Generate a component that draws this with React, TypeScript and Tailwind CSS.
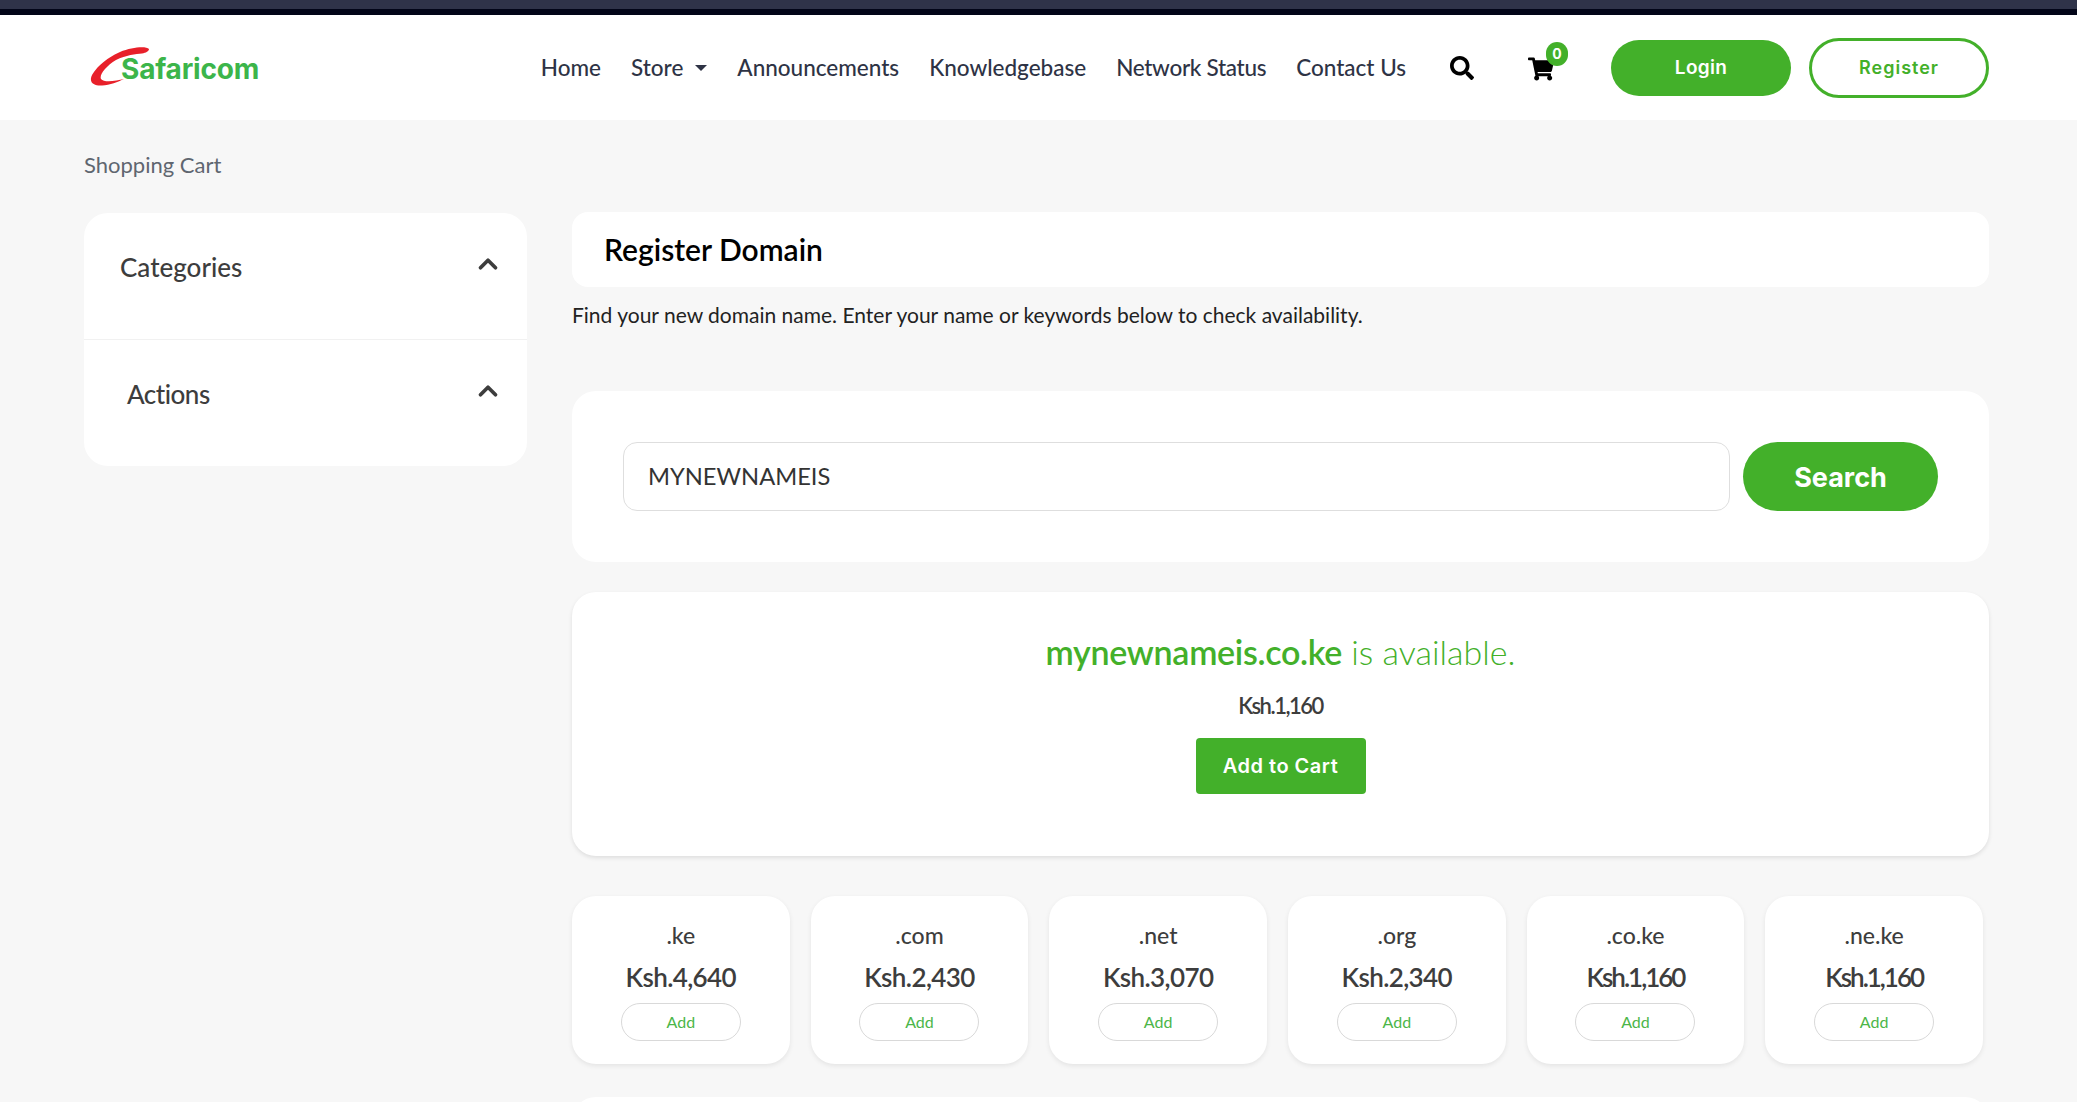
import { ChevronUp } from "lucide-react";
import { FaSearch, FaShoppingCart } from "react-icons/fa";

const navLinks = [
  { label: "Announcements", tracking: "" },
  { label: "Knowledgebase", tracking: "" },
  { label: "Network Status", tracking: "tracking-[-0.3px]" },
  { label: "Contact Us", tracking: "" },
];

const tlds = [
  { name: ".ke", price: "Ksh.4,640", tracking: "tracking-[-0.6px]" },
  { name: ".com", price: "Ksh.2,430", tracking: "tracking-[-0.6px]" },
  { name: ".net", price: "Ksh.3,070", tracking: "tracking-[-0.6px]" },
  { name: ".org", price: "Ksh.2,340", tracking: "tracking-[-0.6px]" },
  { name: ".co.ke", price: "Ksh.1,160", tracking: "tracking-[-2px]" },
  { name: ".ne.ke", price: "Ksh.1,160", tracking: "tracking-[-2px]" },
];

function Logo() {
  return (
    <div className="relative h-[66px] w-[170px]">
      <svg viewBox="0 0 60 40" className="absolute left-[1px] top-[12px] h-[40px] w-[60px]">
        <path
          d="M59 2C56-1 42 0 30 5C16 11 3 23 1 31C0 37 6 39 12 38.5C20 38 28 35 34 32C26 34 14 36 11 32C9 28 16 19 26 13C36 8 46 7 52 6.5C56 6 59 4 59 2Z"
          fill="#e8202a"
        />
      </svg>
      <span className="absolute left-[32px] top-[14px] font-['Inter',sans-serif] text-[28px] font-bold leading-[40px] tracking-[-0.2px] text-[#3cb54a]">
        Safaricom
      </span>
    </div>
  );
}

function Header() {
  return (
    <header className="flex h-[105px] items-center bg-white pl-[89px] pr-[88px]">
      <Logo />
      <nav className="ml-auto flex items-center font-['Lato',sans-serif] text-[22.5px] font-medium text-[#2e3345]">
        <a>Home</a>
        <a className="ml-[30px] flex items-center">
          Store
          <span className="ml-[12px] h-0 w-0 border-x-[6px] border-t-[6px] border-x-transparent border-t-[#2e3345]" />
        </a>
        {navLinks.map((link) => (
          <a key={link.label} className={`ml-[30px] ${link.tracking}`}>
            {link.label}
          </a>
        ))}
      </nav>
      <FaSearch className="ml-[44px] h-[24px] w-[24px] text-black" />
      <div className="relative ml-[54px] h-[28px] w-[26px]">
        <FaShoppingCart className="mt-[3px] h-[24px] w-[26px] text-black" />
        <span className="absolute -right-[14px] -top-[12px] flex h-[24px] w-[22px] items-center justify-center rounded-full bg-[#43b02a] font-['Inter',sans-serif] text-[14px] font-bold text-white">
          0
        </span>
      </div>
      <button className="ml-[57px] h-[56px] w-[180px] rounded-full bg-[#43b02a] pt-[2px] font-['Inter',sans-serif] text-[19px] font-semibold tracking-[0.3px] text-white">
        Login
      </button>
      <button className="ml-[18px] h-[60px] w-[180px] rounded-full border-[3px] border-[#43b02a] bg-white font-['Inter',sans-serif] text-[18px] font-semibold tracking-[1px] text-[#43b02a]">
        Register
      </button>
    </header>
  );
}

function Sidebar() {
  return (
    <aside className="mt-[1px] h-[253px] w-[443px] shrink-0 rounded-[24px] bg-white font-['Lato',sans-serif] text-[#3d3d3d]">
      <div className="flex h-[127px] items-start justify-between border-b border-[#f1f1f1] pl-[36px] pr-[24px] pt-[37px]">
        <span className="text-[26px] font-medium leading-[34px]">Categories</span>
        <ChevronUp className="-mt-[1px] h-[30px] w-[30px]" strokeWidth={3} />
      </div>
      <div className="flex items-start justify-between pl-[43px] pr-[24px] pt-[37px]">
        <span className="text-[26px] font-medium leading-[34px] tracking-[-0.5px]">Actions</span>
        <ChevronUp className="-mt-[1px] h-[30px] w-[30px]" strokeWidth={3} />
      </div>
    </aside>
  );
}

function TldCard({ name, price, tracking }: { name: string; price: string; tracking: string }) {
  return (
    <div className="flex h-[168px] flex-col items-center rounded-[24px] bg-white pt-[23px] shadow-[0_2px_5px_rgba(0,0,0,0.08)]">
      <div className="text-[23px] font-medium leading-[32px] text-[#3d3d3d]">{name}</div>
      <div className={`mt-[5px] text-[26px] font-semibold leading-[42px] text-[#3d3d3d] ${tracking}`}>{price}</div>
      <button className="mt-[5px] h-[38px] w-[120px] rounded-full border border-[#d9d9d9] text-[16px] text-[#4cb648]">
        Add
      </button>
    </div>
  );
}

export default function App() {
  return (
    <div className="h-[1102px] overflow-hidden bg-[#f7f7f7] font-['Lato',sans-serif]">
      <div className="h-[9px] bg-[#2f3349]" />
      <div className="h-[6px] bg-[#020518]" />
      <Header />

      <div className="pl-[84px] pr-[88px]">
        <div className="pt-[31px] text-[22px] leading-[28px] text-[#5f6670]">Shopping Cart</div>

        <div className="mt-[33px] flex gap-[45px]">
          <Sidebar />

          <main className="min-w-0 flex-1">
            <div className="flex h-[75px] items-center rounded-[16px] bg-white pl-[32px]">
              <h1 className="text-[30px] font-semibold text-black">Register Domain</h1>
            </div>
            <p className="mt-[14px] text-[21px] leading-[28px] text-[#222222]">
              Find your new domain name. Enter your name or keywords below to check availability.
            </p>

            <div className="mt-[62px] flex h-[171px] items-center gap-[13px] rounded-[24px] bg-white pl-[51px] pr-[51px]">
              <div className="flex h-[69px] flex-1 items-center rounded-[14px] border border-[#dedede] pl-[24px] text-[23.7px] text-[#333333]">
                MYNEWNAMEIS
              </div>
              <button className="h-[69px] w-[195px] rounded-full bg-[#43b02a] pt-[4px] font-['Inter',sans-serif] text-[27px] font-bold text-white">
                Search
              </button>
            </div>

            <div className="mt-[30px] flex h-[264px] flex-col items-center rounded-[24px] bg-white pt-[40px] shadow-[0_2px_4px_rgba(0,0,0,0.1)]">
              <div className="text-[34px] font-light leading-[40px] text-[#43b02a]">
                <span className="font-semibold tracking-[-0.3px]">mynewnameis.co.ke</span> is available.
              </div>
              <div className="mt-[19px] text-[22px] font-semibold leading-[30px] tracking-[-1.5px] text-[#3d3d3d]">
                Ksh.1,160
              </div>
              <button className="mt-[17px] h-[56px] w-[170px] rounded-[4px] bg-[#43b02a] font-['Inter',sans-serif] text-[20px] font-semibold tracking-[0.5px] text-white">
                Add to Cart
              </button>
            </div>

            <div className="mt-[40px] grid w-[1411px] grid-cols-6 gap-[21px]">
              {tlds.map((tld) => (
                <TldCard key={tld.name} name={tld.name} price={tld.price} tracking={tld.tracking} />
              ))}
            </div>

            <div className="mt-[33px] h-[40px] rounded-t-[24px] bg-white" />
          </main>
        </div>
      </div>
    </div>
  );
}
